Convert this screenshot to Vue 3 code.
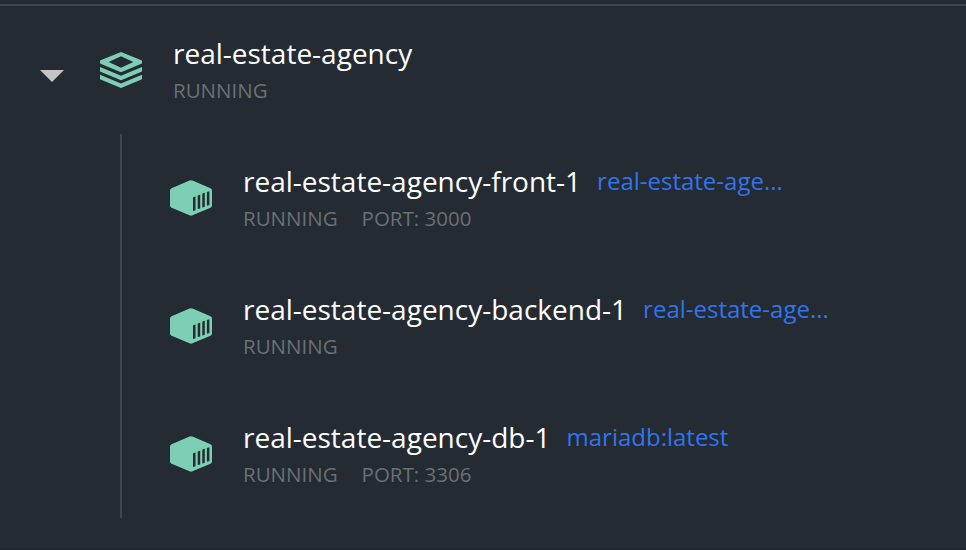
<script setup>
const project = { name: 'real-estate-agency', status: 'RUNNING' }
const containers = [
  { name: 'real-estate-agency-front-1', image: 'real-estate-age...', status: 'RUNNING', port: 'PORT: 3000' },
  { name: 'real-estate-agency-backend-1', image: 'real-estate-age...', status: 'RUNNING', port: '' },
  { name: 'real-estate-agency-db-1', image: 'mariadb:latest', status: 'RUNNING', port: 'PORT: 3306' },
]
</script>

<template>
  <main class="panel">
    <header class="row project">
      <svg class="caret" width="24" height="12" viewBox="0 0 24 12"><path d="M0 0h24L12 12z" fill="#c4c4c4" /></svg>
      <svg class="icon stack" width="42" height="36" viewBox="0 0 42 36">
        <path fill="#7ccfb5" fill-rule="evenodd" d="M21 0 42 8.600V11.600L21 20.200 0 11.600V8.600ZM21 4.300 8.600 10 21 15.700 33.400 10Z" />
        <path fill="#7ccfb5" d="M0 15.100 21 23.700 42 15.100V19.600L21 28.200 0 19.600ZM0 22.800 21 31.400 42 22.800V27.300L21 36 0 27.300Z" />
      </svg>
      <div class="info">
        <div class="heading"><span class="name">{{ project.name }}</span></div>
        <div class="meta"><span>{{ project.status }}</span></div>
      </div>
    </header>
    <section class="containers">
      <article v-for="c in containers" :key="c.name" class="row">
        <svg class="icon" width="42" height="36" viewBox="0 0 42 36">
          <path fill="#7ccfb5" d="M19.500.600Q21-.200 22.500.600L40.500 8.200Q42 8.900 42 10.500V25.500Q42 27 40.500 27.700L22.500 35.300Q21 36 19.500 35.300L1.500 27.700Q0 27 0 25.500V10.500Q0 8.900 1.500 8.200Z" />
          <path fill="#242b32" d="M23 17.300 25.500 16.600V30.200L23 30.900ZM27.700 15.500 30.200 14.800V28.400L27.700 29.100ZM32.300 13.500 34.800 12.800V26.700L32.300 27.400ZM36.900 11.900 39.400 11.200V25.100L36.900 25.800Z" />
        </svg>
        <div class="info">
          <div class="heading">
            <span class="name">{{ c.name }}</span>
            <span class="image">{{ c.image }}</span>
          </div>
          <div class="meta">
            <span>{{ c.status }}</span>
            <span v-if="c.port">{{ c.port }}</span>
          </div>
        </div>
      </article>
    </section>
  </main>
</template>

<style>
body {
  margin: 0;
  background: #242b32;
}
</style>

<style scoped>
.panel {
  box-sizing: border-box;
  width: 966px;
  height: 550px;
  padding-top: 4px;
  overflow: hidden;
  background: #242b32;
  border-bottom: 2px solid #1f2730;
  font-family: "Open Sans", "Noto Sans", sans-serif;
}
.row {
  display: flex;
  box-sizing: border-box;
  height: 128px;
  padding-left: 48px;
}
.project {
  height: 130px;
  padding-left: 40px;
  border-top: 2px solid #3f464d;
}
.caret {
  margin: 64px 36px 0 0;
  flex: none;
}
.icon {
  flex: none;
  margin: 46px 31px 0 0;
}
.containers {
  margin-left: 120px;
  border-left: 2px solid #3f464d;
}
.info {
  padding-top: 27px;
}
.heading {
  display: flex;
  align-items: center;
  height: 40px;
  gap: 16px;
  white-space: nowrap;
}
.name {
  color: #fff;
  font-size: 28px;
  line-height: 40px;
}
.image {
  color: #3274ed;
  font-size: 24px;
  line-height: 40px;
}
.meta {
  display: flex;
  gap: 24px;
  height: 32px;
  padding-top: 1px;
  color: #6a7074;
  font-size: 20.5px;
  line-height: 32px;
}
</style>
